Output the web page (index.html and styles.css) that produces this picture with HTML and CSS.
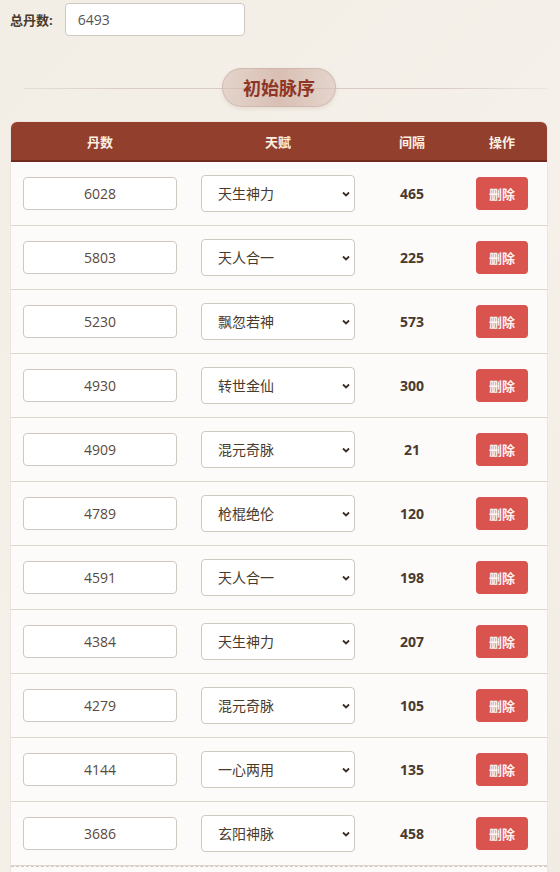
FILE: index.html
```html
<!DOCTYPE html>
<html lang="zh">
<head>
<meta charset="utf-8">
<title>初始脉序</title>
<link rel="stylesheet" href="styles.css">
</head>
<body>
<div class="page">
  <div class="total-row">
    <label class="total-label">总丹数:</label>
    <input class="total-input" type="text" value="6493">
  </div>

  <div class="section-title">
    <span class="pill">初始脉序</span>
  </div>

  <div class="table-card">
    <table class="seq">
      <thead>
        <tr><th class="c1">丹数</th><th class="c2">天赋</th><th class="c3">间隔</th><th class="c4">操作</th></tr>
      </thead>
      <tbody>
        <tr><td><input class="num" type="text" value="6028"></td><td><div class="sel"><select><option>天生神力</option></select><svg viewBox="0 0 10 10"><path d="M2 3.5 L5 6.5 L8 3.5"/></svg></div></td><td class="gap">465</td><td class="act"><button class="del">删除</button></td></tr>
        <tr><td><input class="num" type="text" value="5803"></td><td><div class="sel"><select><option>天人合一</option></select><svg viewBox="0 0 10 10"><path d="M2 3.5 L5 6.5 L8 3.5"/></svg></div></td><td class="gap">225</td><td class="act"><button class="del">删除</button></td></tr>
        <tr><td><input class="num" type="text" value="5230"></td><td><div class="sel"><select><option>飘忽若神</option></select><svg viewBox="0 0 10 10"><path d="M2 3.5 L5 6.5 L8 3.5"/></svg></div></td><td class="gap">573</td><td class="act"><button class="del">删除</button></td></tr>
        <tr><td><input class="num" type="text" value="4930"></td><td><div class="sel"><select><option>转世金仙</option></select><svg viewBox="0 0 10 10"><path d="M2 3.5 L5 6.5 L8 3.5"/></svg></div></td><td class="gap">300</td><td class="act"><button class="del">删除</button></td></tr>
        <tr><td><input class="num" type="text" value="4909"></td><td><div class="sel"><select><option>混元奇脉</option></select><svg viewBox="0 0 10 10"><path d="M2 3.5 L5 6.5 L8 3.5"/></svg></div></td><td class="gap">21</td><td class="act"><button class="del">删除</button></td></tr>
        <tr><td><input class="num" type="text" value="4789"></td><td><div class="sel"><select><option>枪棍绝伦</option></select><svg viewBox="0 0 10 10"><path d="M2 3.5 L5 6.5 L8 3.5"/></svg></div></td><td class="gap">120</td><td class="act"><button class="del">删除</button></td></tr>
        <tr><td><input class="num" type="text" value="4591"></td><td><div class="sel"><select><option>天人合一</option></select><svg viewBox="0 0 10 10"><path d="M2 3.5 L5 6.5 L8 3.5"/></svg></div></td><td class="gap">198</td><td class="act"><button class="del">删除</button></td></tr>
        <tr><td><input class="num" type="text" value="4384"></td><td><div class="sel"><select><option>天生神力</option></select><svg viewBox="0 0 10 10"><path d="M2 3.5 L5 6.5 L8 3.5"/></svg></div></td><td class="gap">207</td><td class="act"><button class="del">删除</button></td></tr>
        <tr><td><input class="num" type="text" value="4279"></td><td><div class="sel"><select><option>混元奇脉</option></select><svg viewBox="0 0 10 10"><path d="M2 3.5 L5 6.5 L8 3.5"/></svg></div></td><td class="gap">105</td><td class="act"><button class="del">删除</button></td></tr>
        <tr><td><input class="num" type="text" value="4144"></td><td><div class="sel"><select><option>一心两用</option></select><svg viewBox="0 0 10 10"><path d="M2 3.5 L5 6.5 L8 3.5"/></svg></div></td><td class="gap">135</td><td class="act"><button class="del">删除</button></td></tr>
        <tr><td><input class="num" type="text" value="3686"></td><td><div class="sel"><select><option>玄阳神脉</option></select><svg viewBox="0 0 10 10"><path d="M2 3.5 L5 6.5 L8 3.5"/></svg></div></td><td class="gap">458</td><td class="act"><button class="del">删除</button></td></tr>
      </tbody>
    </table>
    <div class="table-foot"></div>
  </div>
</div>
</body>
</html>
```

FILE: styles.css
```css
* { box-sizing: border-box; }
html, body { margin: 0; padding: 0; }
body {
  font-family: "Open Sans", "Noto Sans CJK SC", sans-serif;
  color: #4a3a2c;
  background: linear-gradient(135deg, #f2eee6 0%, #f5f1ea 50%, #f1ece3 100%);
  min-height: 872px;
}
.page { padding: 3px 13px 0 11px; }

.total-row { display: flex; align-items: center; gap: 12px; }
.total-label { font-size: 13px; font-weight: 700; color: #4a3a2c; margin-left: -1px; }
.total-input {
  width: 180px; height: 33px;
  border: 1px solid #cfc8c0; border-radius: 4px;
  background: #fff; padding: 0 12px;
  font-family: "Open Sans", "Noto Sans CJK SC", sans-serif;
  font-size: 14px; color: #555;
}

.section-title {
  position: relative;
  display: flex; justify-content: center;
  margin: 32px 0 15px;
}
.section-title::before {
  content: ""; position: absolute; left: 13px; right: 0; top: 50%;
  height: 1px; background: linear-gradient(90deg, rgba(200,180,170,0.3), #d9ccc5 20%, #d9ccc5 80%, rgba(220,205,195,0.3));
}
.pill {
  position: relative;
  display: inline-block;
  height: 39px; line-height: 39px;
  padding: 0 20px;
  border-radius: 20px;
  font-size: 18px; font-weight: 700; color: #8e3526;
  background: linear-gradient(90deg, rgba(215,190,180,0.55), rgba(205,170,158,0.7) 50%, rgba(215,190,180,0.55));
  border: 1px solid rgba(200,175,165,0.6);
  box-shadow: 0 2px 4px rgba(120,80,60,0.12);
}

.table-card {
  background: #fcfbf9;
  border-radius: 6px 6px 0 0;
  box-shadow: 0 0 0 1px #ebe5dd;
  overflow: hidden;
}
.seq { width: 100%; border-collapse: collapse; table-layout: fixed; }
.seq thead tr { background: #933f2e; border-bottom: 2px solid #6f2a1e; }
.seq th {
  height: 39px; padding: 0;
  font-size: 13px; font-weight: 700; color: #fcefe2;
  text-align: center;
}
.c1, .c2 { width: 178px; }
.c3, .c4 { width: 90px; }
.seq td {
  padding: 13px 12px;
  border-bottom: 1px solid #dcd6cf;
  text-align: center;
  vertical-align: middle;
  height: 64px;
}
.num {
  display: block;
  width: 154px; height: 33px;
  border: 1px solid #cfc8c0; border-radius: 4px;
  background: #fff;
  text-align: center;
  font-family: "Open Sans", "Noto Sans CJK SC", sans-serif;
  font-size: 14px; color: #5a4a3a;
}
.sel { position: relative; width: 154px; height: 37px; }
.sel select {
  appearance: none; -webkit-appearance: none;
  width: 154px; height: 37px;
  border: 1px solid #cfc8c0; border-radius: 4px;
  background: #fff;
  padding: 0 0 0 16px;
  font-family: "Open Sans", "Noto Sans CJK SC", sans-serif;
  font-size: 14px; color: #4a3a2c;
}
.sel svg {
  position: absolute; right: 4px; top: 14px;
  width: 10px; height: 10px;
  fill: none; stroke: #3a2e26; stroke-width: 1.8;
  pointer-events: none;
}
.gap { font-size: 14px; font-weight: 700; color: #4a3a2c; }
.del {
  width: 52px; height: 33px;
  border: none; border-radius: 4px;
  background: #d9534f;
  color: #fdf2f2;
  font-family: "Noto Sans CJK SC", sans-serif;
  font-size: 13px; font-weight: 700;
}
.table-foot { border-top: 1px dashed #cfc8c0; height: 10px; }
```
